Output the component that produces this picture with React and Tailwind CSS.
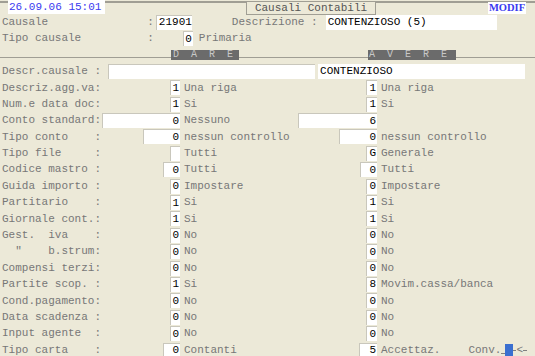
import React from "react";

const mono = "font-['Liberation_Mono',monospace]";

const rows = [
  { label: "Descriz.agg.va:", lw: "w-[10px]", lv: "1", ld: "Una riga", rw: "w-[11px]", rv: "1", rd: "Una riga" },
  { label: "Num.e data doc:", lw: "w-[10px]", lv: "1", ld: "Si", rw: "w-[11px]", rv: "1", rd: "Si" },
  { label: "Conto standard:", lw: "w-[78px]", lv: "0", ld: "Nessuno", rw: "w-[79px]", rv: "6", rd: "" },
  { label: "Tipo conto    :", lw: "w-[37px]", lv: "0", ld: "nessun controllo", rw: "w-[38px]", rv: "0", rd: "nessun controllo" },
  { label: "Tipo file     :", lw: "w-[10px]", lv: "", ld: "Tutti", rw: "w-[11px]", rv: "G", rd: "Generale" },
  { label: "Codice mastro :", lw: "w-[17px]", lv: "0", ld: "Tutti", rw: "w-[17px]", rv: "0", rd: "Tutti" },
  { label: "Guida importo :", lw: "w-[10px]", lv: "0", ld: "Impostare", rw: "w-[11px]", rv: "0", rd: "Impostare" },
  { label: "Partitario    :", lw: "w-[10px]", lv: "1", ld: "Si", rw: "w-[11px]", rv: "1", rd: "Si" },
  { label: "Giornale cont.:", lw: "w-[10px]", lv: "1", ld: "Si", rw: "w-[11px]", rv: "1", rd: "Si" },
  { label: "Gest.  iva    :", lw: "w-[10px]", lv: "0", ld: "No", rw: "w-[11px]", rv: "0", rd: "No" },
  { label: '  "    b.strum:', lw: "w-[10px]", lv: "0", ld: "No", rw: "w-[11px]", rv: "0", rd: "No" },
  { label: "Compensi terzi:", lw: "w-[10px]", lv: "0", ld: "No", rw: "w-[11px]", rv: "0", rd: "No" },
  { label: "Partite scop. :", lw: "w-[10px]", lv: "1", ld: "Si", rw: "w-[11px]", rv: "8", rd: "Movim.cassa/banca" },
  { label: "Cond.pagamento:", lw: "w-[10px]", lv: "0", ld: "No", rw: "w-[11px]", rv: "0", rd: "No" },
  { label: "Data scadenza :", lw: "w-[10px]", lv: "0", ld: "No", rw: "w-[11px]", rv: "0", rd: "No" },
  { label: "Input agente  :", lw: "w-[10px]", lv: "0", ld: "No", rw: "w-[11px]", rv: "0", rd: "No" },
  { label: "Tipo carta    :", lw: "w-[17px]", lv: "0", ld: "Contanti", rw: "w-[18px]", rv: "5", rd: "Accettaz.", conv: true },
];

function Box({ w, value, className = "" }) {
  return (
    <div
      className={`${w} shrink-0 h-[15px] bg-white border-l border-t border-[#c9c7bc] flex items-center justify-end pr-[1px] text-black leading-none ${className}`}
    >
      {value}
    </div>
  );
}

function Row({ r }) {
  return (
    <div className="h-[16.4px] flex items-center">
      <div className="w-[180px] shrink-0 pl-[2px] flex items-center justify-between">
        <span className="whitespace-pre">{r.label}</span>
        <Box w={r.lw} value={r.lv} />
      </div>
      <div className="w-[116px] shrink-0 pl-[4px] whitespace-pre">{r.ld}</div>
      <div className="w-[81px] shrink-0 flex justify-end">
        <Box w={r.rw} value={r.rv} />
      </div>
      <div className="flex-1 min-w-0 pl-[4px] flex items-center whitespace-pre">
        <span>{r.rd}</span>
        {r.conv ? (
          <div className="ml-[28px] flex items-center">
            <span>Conv.</span>
            <div className="w-[4px] h-px bg-[#808080] mt-[6px]" />
            <div className="w-[8px] h-[15px] bg-[#3a6fd0] mt-[2px]" />
            <div className="w-[3px] h-px bg-[#808080]" />
            <span>&lt;</span>
            <div className="w-[4px] h-px bg-[#808080]" />
          </div>
        ) : null}
      </div>
    </div>
  );
}

export default function App() {
  return (
    <div
      className={`w-[535px] h-[356px] overflow-hidden bg-[#ece9d8] text-[11px] text-[#777777] ${mono}`}
    >
      {/* top bar */}
      <div className="h-[14px] flex items-start bg-[linear-gradient(to_bottom,#ece9d8_1px,#a09e94_1px,#a09e94_3px,#ece9d8_3px)]">
        <div className="ml-[8px] w-[97px] h-[14px] bg-white text-[#3a3af0] leading-[14px] pl-[1px]">
          26.09.06 15:01
        </div>
        <div className="ml-[141px] mt-[1px] w-[130px] h-[14px] bg-[#ece9d8] border border-[#a09e94] text-[#555555] leading-[12px] text-center">
          Causali Contabili
        </div>
        <div className="ml-[112px] mt-[2px] w-[38px] h-[12px] bg-white text-[#3a3af0] leading-[12px] text-center font-bold text-[10.5px] font-['Liberation_Serif',serif]">
          MODIF
        </div>
      </div>

      {/* Causale */}
      <div className="h-[16.4px] flex items-center pl-[2px]">
        <span className="whitespace-pre">{"Causale               :"}</span>
        <Box w="w-[36px]" value="21901" className="ml-[2px] !justify-start pl-[2px]" />
        <span className="ml-[40px] whitespace-pre">Descrizione :</span>
        <div className="ml-[8px] w-[171px] h-[15px] bg-white text-black pl-[2px] leading-[15px]">
          CONTENZIOSO (5)
        </div>
      </div>

      {/* Tipo causale */}
      <div className="h-[16.4px] flex items-center pl-[2px]">
        <span className="whitespace-pre">{"Tipo causale          :"}</span>
        <Box w="w-[10px]" value="0" className="ml-[29px]" />
        <span className="ml-[6px]">Primaria</span>
      </div>

      {/* DARE / AVERE header */}
      <div className="h-[16.4px] flex items-center">
        <div className="w-[171px] h-px bg-[#a09e94] mt-[5px]" />
        <div className="w-[68px] h-[10px] bg-[#6b6b6b] text-[#c8c8c8] text-[10px] leading-[10px] whitespace-pre pl-[2px]">
          {"D  A  R  E"}
        </div>
        <div className="w-[129px] h-px bg-[#a09e94] mt-[5px]" />
        <div className="w-[88px] h-[10px] bg-[#6b6b6b] text-[#c8c8c8] text-[10px] leading-[10px] whitespace-pre pl-[1px]">
          {"A  V  E  R  E"}
        </div>
        <div className="flex-1 h-px bg-[#a09e94] mt-[5px]" />
      </div>

      {/* Descr.causale */}
      <div className="h-[16.4px] flex items-center pl-[2px]">
        <span className="whitespace-pre">Descr.causale :</span>
        <div className="ml-[7px] w-[207px] h-[15px] bg-white border-l border-t border-[#c9c7bc]" />
        <div className="ml-[3px] w-[207px] h-[15px] bg-white text-black pl-[2px] leading-[15px]">
          CONTENZIOSO
        </div>
      </div>

      {rows.map((r, i) => (
        <Row key={i} r={r} />
      ))}
    </div>
  );
}
